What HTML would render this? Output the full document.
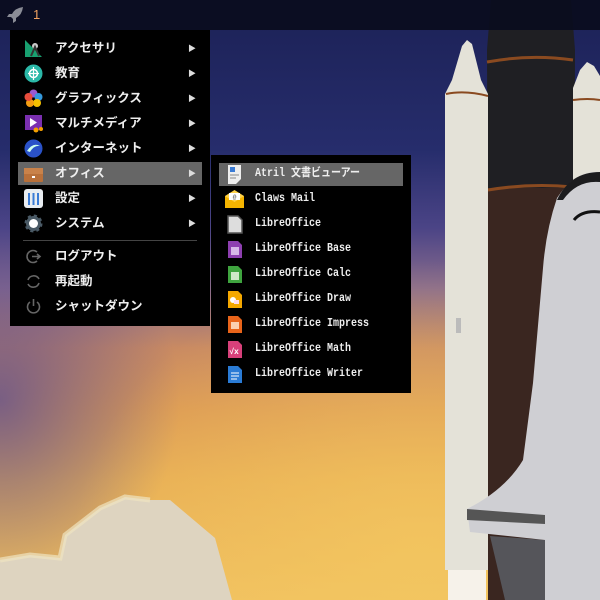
<!DOCTYPE html>
<html><head><meta charset="utf-8"><style>
*{margin:0;padding:0;box-sizing:border-box}
body{width:600px;height:600px;overflow:hidden;position:relative;font-family:"Liberation Sans","Noto Sans CJK JP",sans-serif;
background:linear-gradient(180deg,#1c2156 0%,#262d6c 25%,#4b4486 38%,#8a6c8c 48%,#c98a62 58%,#dc9a55 68%,#e8ae55 80%,#f0c060 100%);}
.glow{position:absolute;left:0;top:0;width:600px;height:600px;background:radial-gradient(ellipse 350px 300px at 420px 560px,rgba(244,200,96,.75),rgba(244,200,96,0) 100%)}
.glow2{position:absolute;left:0;top:0;width:600px;height:600px;background:radial-gradient(ellipse 180px 200px at 0px 400px,rgba(80,70,150,.7),rgba(80,70,150,0) 100%)}
.bar{position:absolute;left:0;top:0;width:600px;height:30px;background:rgba(10,12,30,.93)}
.menu{position:absolute;background:#000;}
.row{position:absolute;left:8px;height:23px;width:184px;color:#eee;font-weight:bold;font-size:12.5px;line-height:23px}
.row .t{position:absolute;left:37px}
.row .a{position:absolute;left:170px;font-size:8px;color:#ddd}
.row.hl{background:#666}
.ic{position:absolute;left:6px;top:2px;width:19px;height:19px}
.sub .row{font-family:"Liberation Mono","Noto Sans CJK JP",monospace;font-size:10px}
.sub .row .t{left:36px;transform:scaleY(1.15);transform-origin:left center}
</style></head><body>
<div class="glow2"></div><div class="glow"></div>
<svg style="position:absolute;left:0;top:0" width="600" height="600">
 <path d="M0 560 L30 555 L60 558 L65 535 L100 508 L125 497 L150 500 L170 500 L215 538 L232 600 L0 600Z" fill="#ded4c0"/>
 <path d="M0 560 L30 555 L60 558 L65 535 L100 508 L125 497 L150 500" fill="none" stroke="#f0e4c0" stroke-width="5" opacity=".7"/>
 <!-- tank -->
 <path d="M491 0 L571 0 L575 50 L573 600 L489 600 L487 50Z" fill="#1f1f23"/>
 <rect x="488" y="188" width="85" height="412" fill="#3a2620"/>
 <path d="M487 62 Q530 54 573 60" stroke="#8a4a20" stroke-width="3" fill="none"/>
 <path d="M488 190 Q530 183 573 187" stroke="#8a4a20" stroke-width="3" fill="none"/>
 <!-- left booster -->
 <path d="M445 94 L452 80 L462 46 L467 40 L472 44 L481 80 L488 94 L488 570 L445 570Z" fill="#e4e2d8"/>
 <path d="M446 94 Q465 90 488 96" stroke="#8a4a20" stroke-width="2" fill="none"/>
 <rect x="456" y="318" width="5" height="15" fill="#bbb"/>
 <rect x="448" y="570" width="38" height="30" fill="#f6f2ea"/>
 <!-- right booster -->
 <path d="M573 88 L580 70 L587 62 L594 66 L600 76 L600 600 L573 600Z" fill="#e4e2d8"/>
 <path d="M573 100 Q588 98 600 100" stroke="#8a4a20" stroke-width="2" fill="none"/>
 <!-- orbiter -->
 <path d="M490 536 L545 540 L545 600 L505 600Z" fill="#55555a"/>
 <path d="M557 198 Q575 170 600 172 L600 600 L545 600 L545 540 L470 532 L467 509 Q505 490 523 460 L533 383 L543 268 Q546 230 557 198Z" fill="#cfcfd3"/>
 <path d="M557 200 Q570 172 600 172 L600 182 Q577 180 563 200Z" fill="#1c1c1e"/>
 <path d="M574 220 Q582 210 600 212" stroke="#111" stroke-width="3" fill="none"/>
 <path d="M467 509 L545 515 L545 524 L467 520Z" fill="#555"/>
</svg>
<div class="bar">
 <svg style="position:absolute;left:6px;top:6px" width="18" height="18" viewBox="0 0 18 18"><path d="M17 1 Q9 2 6 8 L3 8 L1 11 L5 11 L7 13 L7 17 L10 15 L10 12 Q16 9 17 1Z" fill="#8a8c96"/></svg>
 <span style="position:absolute;left:33px;top:7px;color:#f0a060;font-size:13px">1</span>
</div>

<div class="menu" style="left:10px;top:30px;width:200px;height:296px">
 <div class="row" style="top:7px"><svg class="ic" viewBox="0 0 19 19"><path d="M1 1 L18 18 L1 18Z" fill="#18a070"/><circle cx="11" cy="7" r="3" fill="#ccc"/><path d="M7 17 L11 8 L15 17" stroke="#333" stroke-width="2" fill="none"/></svg><span class="t">アクセサリ</span><span class="a">▶</span></div>
 <div class="row" style="top:32px"><svg class="ic" viewBox="0 0 19 19"><circle cx="9.5" cy="9.5" r="9" fill="#2bb8a8"/><circle cx="9.5" cy="9.5" r="4" fill="none" stroke="#fff" stroke-width="1.5"/><path d="M9.5 3v13M4 9.5h11" stroke="#fff" stroke-width="1.2"/></svg><span class="t">教育</span><span class="a">▶</span></div>
 <div class="row" style="top:57px"><svg class="ic" viewBox="0 0 19 19"><circle cx="9.5" cy="4.5" r="4" fill="#9b59d0"/><circle cx="14.5" cy="8" r="4" fill="#3498db"/><circle cx="13" cy="14" r="4" fill="#f5c000"/><circle cx="6" cy="14" r="4" fill="#f39c12"/><circle cx="4.5" cy="8" r="4" fill="#e74c3c"/></svg><span class="t">グラフィックス</span><span class="a">▶</span></div>
 <div class="row" style="top:82px"><svg class="ic" viewBox="0 0 19 19"><rect x="1" y="1" width="17" height="15" fill="#7a2fb0"/><path d="M6 4 L13 8.5 L6 13Z" fill="#fff"/><circle cx="12" cy="16" r="2.5" fill="#f5a000"/><circle cx="17" cy="15" r="2" fill="#f5a000"/></svg><span class="t">マルチメディア</span><span class="a">▶</span></div>
 <div class="row" style="top:107px"><svg class="ic" viewBox="0 0 19 19"><circle cx="9.5" cy="9.5" r="9" fill="#2a52c8"/><path d="M3 12 Q9 3 16 7 Q10 6 6 13Z" fill="#cfe"/></svg><span class="t">インターネット</span><span class="a">▶</span></div>
 <div class="row hl" style="top:132px"><svg class="ic" viewBox="0 0 19 19"><rect x="0" y="4" width="19" height="14" rx="1" fill="#b8703a"/><rect x="0" y="4" width="19" height="6" fill="#c9824a"/><rect x="8" y="12" width="3" height="2" fill="#fff"/></svg><span class="t">オフィス</span><span class="a">▶</span></div>
 <div class="row" style="top:157px"><svg class="ic" viewBox="0 0 19 19"><rect x="0" y="0" width="19" height="19" rx="3" fill="#e8ecf0"/><path d="M5 4v12M9.5 4v12M14 4v12" stroke="#3a7bd5" stroke-width="2"/></svg><span class="t">設定</span><span class="a">▶</span></div>
 <div class="row" style="top:182px"><svg class="ic" viewBox="0 0 19 19"><circle cx="9.5" cy="9.5" r="7.5" fill="#4a5a66" stroke="#4a5a66" stroke-width="3" stroke-dasharray="3 2.9"/><circle cx="9.5" cy="9.5" r="4.5" fill="#fff"/></svg><span class="t">システム</span><span class="a">▶</span></div>
 <div style="position:absolute;left:13px;top:210px;width:174px;height:1px;background:#444"></div>
 <div class="row" style="top:215px"><svg class="ic" viewBox="0 0 19 19"><path d="M13 5 A6 6 0 1 0 13 14" stroke="#666" stroke-width="1.6" fill="none"/><path d="M8 9.5h8M13 7l3 2.5-3 2.5" stroke="#666" stroke-width="1.6" fill="none"/></svg><span class="t">ログアウト</span></div>
 <div class="row" style="top:240px"><svg class="ic" viewBox="0 0 19 19"><path d="M4 8 A6 6 0 0 1 15 7M15 11 A6 6 0 0 1 4 12" stroke="#666" stroke-width="1.6" fill="none"/></svg><span class="t">再起動</span></div>
 <div class="row" style="top:265px"><svg class="ic" viewBox="0 0 19 19"><path d="M6 5 A6 6 0 1 0 13 5M9.5 2v7" stroke="#666" stroke-width="1.6" fill="none"/></svg><span class="t">シャットダウン</span></div>
</div>

<div class="menu sub" style="left:211px;top:155px;width:200px;height:238px">
 <div class="row hl" style="top:8px"><svg class="ic" viewBox="0 0 19 19"><path d="M3 0h13v14l-5 5H3Z" fill="#eee"/><rect x="5" y="2" width="5" height="5" fill="#3a7bd5"/><path d="M5 10h9M5 13h6" stroke="#888"/></svg><span class="t">Atril 文書ビューアー</span></div>
 <div class="row" style="top:33px"><svg class="ic" viewBox="0 0 19 19"><rect x="0" y="6" width="19" height="12" fill="#f5b400"/><path d="M0 6 L9.5 0 L19 6 L9.5 12Z" fill="#ffd24a"/><rect x="4" y="3" width="11" height="7" fill="#fff"/><text x="9.5" y="9" font-size="6" text-anchor="middle" fill="#666">@</text></svg><span class="t">Claws Mail</span></div>
 <div class="row" style="top:58px"><svg class="ic" viewBox="0 0 19 19"><path d="M3 1h10l4 4v13H3Z" fill="#ddd" stroke="#555" stroke-width="1.5"/></svg><span class="t">LibreOffice</span></div>
 <div class="row" style="top:83px"><svg class="ic" viewBox="0 0 19 19"><path d="M3 1h10l4 4v13H3Z" fill="#8e3fb0"/><rect x="6" y="7" width="8" height="8" fill="#d8b8e8"/></svg><span class="t">LibreOffice Base</span></div>
 <div class="row" style="top:108px"><svg class="ic" viewBox="0 0 19 19"><path d="M3 1h10l4 4v13H3Z" fill="#3fa43f"/><rect x="6" y="7" width="8" height="8" fill="#cfe8c8"/></svg><span class="t">LibreOffice Calc</span></div>
 <div class="row" style="top:133px"><svg class="ic" viewBox="0 0 19 19"><path d="M3 1h10l4 4v13H3Z" fill="#f5a800"/><circle cx="8" cy="10" r="3" fill="#fff"/><rect x="9" y="10" width="5" height="4" fill="#fde"/></svg><span class="t">LibreOffice Draw</span></div>
 <div class="row" style="top:158px"><svg class="ic" viewBox="0 0 19 19"><path d="M3 1h10l4 4v13H3Z" fill="#e8641a"/><rect x="6" y="7" width="8" height="7" fill="#fbd0b0"/></svg><span class="t">LibreOffice Impress</span></div>
 <div class="row" style="top:183px"><svg class="ic" viewBox="0 0 19 19"><path d="M3 1h10l4 4v13H3Z" fill="#d8407a"/><text x="9" y="14" font-size="8" text-anchor="middle" fill="#fff">√x</text></svg><span class="t">LibreOffice Math</span></div>
 <div class="row" style="top:208px"><svg class="ic" viewBox="0 0 19 19"><path d="M3 1h10l4 4v13H3Z" fill="#2a7bd5"/><path d="M6 8h8M6 11h8M6 14h6" stroke="#fff"/></svg><span class="t">LibreOffice Writer</span></div>
</div>
</body></html>
